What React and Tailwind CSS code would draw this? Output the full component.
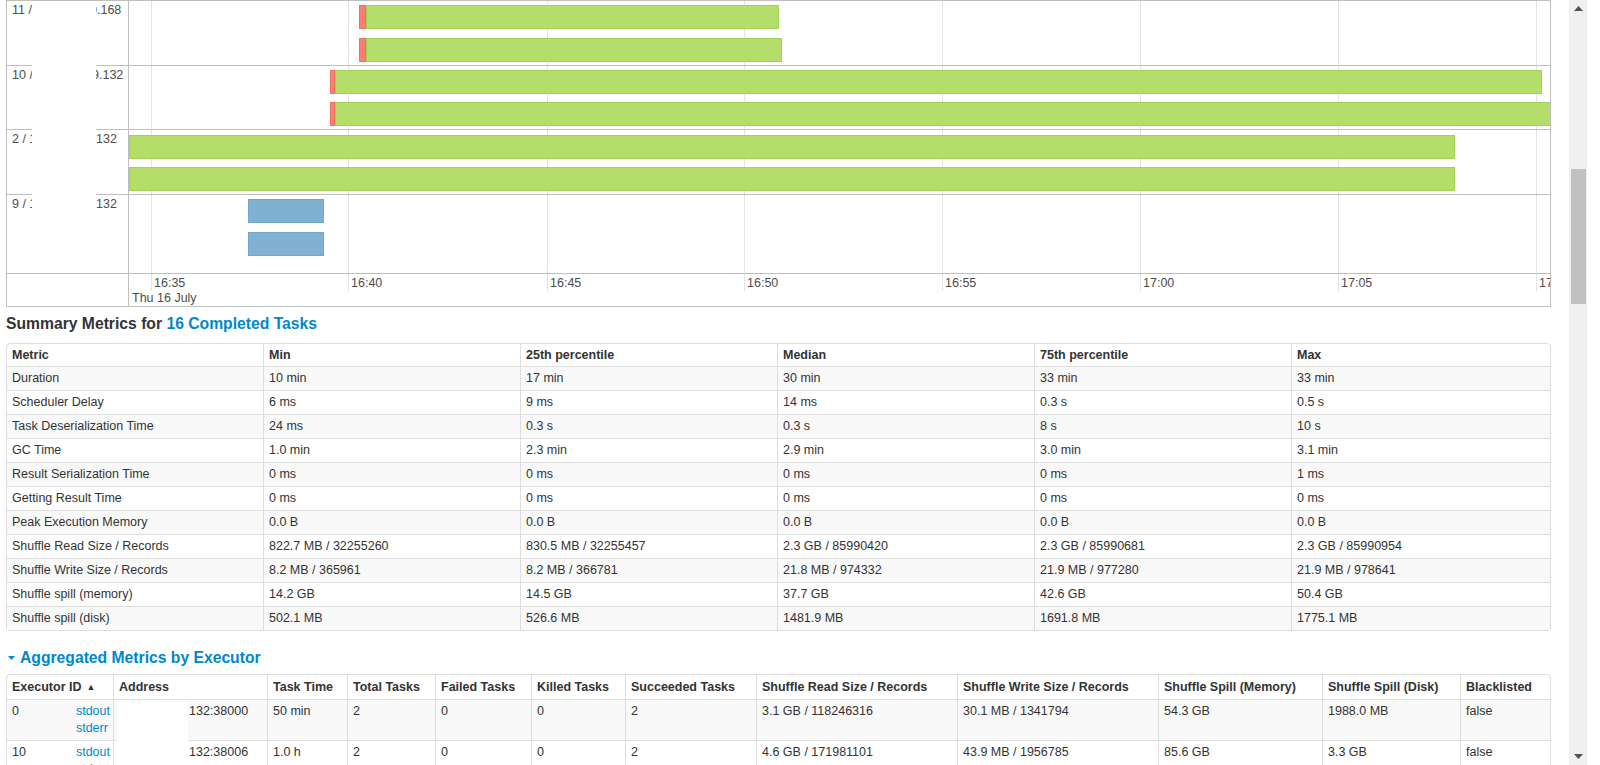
import React from "react";

const ticks = ["16:35", "16:40", "16:45", "16:50", "16:55", "17:00", "17:05", "17:10"];
const tickX = [22, 219, 418, 615, 813, 1011, 1209, 1407];

const lanes = [
  {
    prefix: "11 /",
    gap: "w-[78px]",
    suffix: "0.168",
    h: "h-[65px]",
    bars: [
      { left: 230, top: 4, width: 420, red: 7 },
      { left: 230, top: 37, width: 423, red: 7 },
    ],
  },
  {
    prefix: "10 /",
    gap: "w-[80px]",
    suffix: "9.132",
    h: "h-[64px]",
    bars: [
      { left: 201, top: 4, width: 1212, red: 5 },
      { left: 201, top: 36, width: 1300, red: 5 },
    ],
  },
  {
    prefix: "2 / 1",
    gap: "w-[84px]",
    suffix: "132",
    h: "h-[65px]",
    bars: [
      { left: 0, top: 5, width: 1326 },
      { left: 0, top: 37, width: 1326 },
    ],
  },
  {
    prefix: "9 / 1",
    gap: "w-[84px]",
    suffix: "132",
    h: "h-[79px]",
    bars: [
      { left: 119, top: 4, width: 76, blue: true },
      { left: 119, top: 37, width: 76, blue: true },
    ],
  },
];

const summaryHead = ["Metric", "Min", "25th percentile", "Median", "75th percentile", "Max"];
const summaryWidths = ["w-[256px]", "w-[257px]", "w-[257px]", "w-[257px]", "w-[257px]", "w-[259px]"];
const summaryRows = [
  ["Duration", "10 min", "17 min", "30 min", "33 min", "33 min"],
  ["Scheduler Delay", "6 ms", "9 ms", "14 ms", "0.3 s", "0.5 s"],
  ["Task Deserialization Time", "24 ms", "0.3 s", "0.3 s", "8 s", "10 s"],
  ["GC Time", "1.0 min", "2.3 min", "2.9 min", "3.0 min", "3.1 min"],
  ["Result Serialization Time", "0 ms", "0 ms", "0 ms", "0 ms", "1 ms"],
  ["Getting Result Time", "0 ms", "0 ms", "0 ms", "0 ms", "0 ms"],
  ["Peak Execution Memory", "0.0 B", "0.0 B", "0.0 B", "0.0 B", "0.0 B"],
  ["Shuffle Read Size / Records", "822.7 MB / 32255260", "830.5 MB / 32255457", "2.3 GB / 85990420", "2.3 GB / 85990681", "2.3 GB / 85990954"],
  ["Shuffle Write Size / Records", "8.2 MB / 365961", "8.2 MB / 366781", "21.8 MB / 974332", "21.9 MB / 977280", "21.9 MB / 978641"],
  ["Shuffle spill (memory)", "14.2 GB", "14.5 GB", "37.7 GB", "42.6 GB", "50.4 GB"],
  ["Shuffle spill (disk)", "502.1 MB", "526.6 MB", "1481.9 MB", "1691.8 MB", "1775.1 MB"],
];

const execHead = [
  "Executor ID",
  "Address",
  "Task Time",
  "Total Tasks",
  "Failed Tasks",
  "Killed Tasks",
  "Succeeded Tasks",
  "Shuffle Read Size / Records",
  "Shuffle Write Size / Records",
  "Shuffle Spill (Memory)",
  "Shuffle Spill (Disk)",
  "Blacklisted",
];
const execWidths = [
  "w-[106px]",
  "w-[154px]",
  "w-[80px]",
  "w-[88px]",
  "w-[96px]",
  "w-[94px]",
  "w-[131px]",
  "w-[201px]",
  "w-[201px]",
  "w-[164px]",
  "w-[138px]",
  "w-[90px]",
];
const execRows = [
  ["0", "132:38000", "50 min", "2", "0", "0", "2", "3.1 GB / 118246316", "30.1 MB / 1341794", "54.3 GB", "1988.0 MB", "false"],
  ["10", "132:38006", "1.0 h", "2", "0", "0", "2", "4.6 GB / 171981101", "43.9 MB / 1956785", "85.6 GB", "3.3 GB", "false"],
];

const Bar = ({ left, top, width, red, blue }) => (
  <div className="absolute flex h-[24px]" style={{ left, top, width }}>
    {red ? (
      <div className="h-full shrink-0 bg-[#fb8072] border border-[#e9735f]" style={{ width: red }} />
    ) : null}
    <div
      className={`h-full flex-1 border ${
        blue ? "bg-[#80b1d3] border-[#72a6cb]" : "bg-[#b3de69] border-[#a3d257]"
      }`}
    />
  </div>
);

const Timeline = () => (
  <div className="relative flex w-[1545px] border border-[#bfbfbf] overflow-hidden text-[12.5px] leading-[15px] text-[#4d4d4d]">
    {/* labels */}
    <div className="w-[122px] shrink-0 flex flex-col border-r border-[#bfbfbf]">
      {lanes.map((lane, i) => (
        <div key={i} className={`${lane.h} flex border-b border-[#bfbfbf] pl-[5px] pt-[2px]`}>
          <span className={`${lane.gap} shrink-0 whitespace-nowrap`}>{lane.prefix}</span>
          <span className="whitespace-nowrap">{lane.suffix}</span>
        </div>
      ))}
      <div className="h-[32px]" />
    </div>

    {/* chart */}
    <div className="relative flex-1 flex flex-col overflow-hidden">
      {tickX.map((x) => (
        <div key={x} className="absolute top-0 h-[290px] w-px bg-[#e5e5e5]" style={{ left: x }} />
      ))}
      {lanes.map((lane, i) => (
        <div key={i} className={`relative ${lane.h} border-b border-[#bfbfbf]`}>
          {lane.bars.map((b, j) => (
            <Bar key={j} {...b} />
          ))}
        </div>
      ))}
      <div className="relative h-[32px]">
        {ticks.map((t, i) => (
          <span key={t} className="absolute top-[2px] whitespace-nowrap" style={{ left: tickX[i] + 3 }}>
            {t}
          </span>
        ))}
        <span className="absolute left-[3px] top-[17px] whitespace-nowrap">Thu 16 July</span>
      </div>
    </div>

    {/* redacted host names */}
    <div className="absolute left-[25px] top-0 w-[64px] h-[262px] bg-white" />
  </div>
);

const cell = "px-[5px] py-[3px] leading-[17px] text-left align-top font-normal";

const SummaryTable = () => (
  <table className="table-fixed border-separate border-spacing-0 w-[1545px] border border-[#ddd] rounded-[4px] text-[12.5px]">
    <thead>
      <tr>
        {summaryHead.map((h, i) => (
          <th
            key={h}
            className={`${summaryWidths[i]} px-[5px] py-[2px] leading-[18px] text-left font-bold ${
              i ? "border-l border-[#ddd]" : ""
            }`}
          >
            {h}
          </th>
        ))}
      </tr>
    </thead>
    <tbody>
      {summaryRows.map((row, r) => (
        <tr key={row[0]} className={r % 2 === 0 ? "bg-[#f9f9f9]" : "bg-white"}>
          {row.map((v, i) => (
            <td key={i} className={`${cell} border-t border-[#ddd] ${i ? "border-l" : ""}`}>
              {v}
            </td>
          ))}
        </tr>
      ))}
    </tbody>
  </table>
);

const ExecutorTable = () => (
  <div className="relative w-[1545px]">
    <table className="table-fixed border-separate border-spacing-0 w-[1545px] border border-[#ddd] rounded-[4px] text-[12.5px]">
      <thead>
        <tr>
          {execHead.map((h, i) => (
            <th
              key={h}
              className={`${execWidths[i]} px-[5px] py-[3px] leading-[18px] text-left font-bold whitespace-nowrap ${
                i ? "border-l border-[#ddd]" : ""
              }`}
            >
              {h}
              {i === 0 ? <span className="ml-[5px] text-[9px] align-[1px]">▲</span> : null}
            </th>
          ))}
        </tr>
      </thead>
      <tbody>
        {execRows.map((row, r) => (
          <tr key={row[0]} className={r % 2 === 0 ? "bg-[#f9f9f9]" : "bg-white"}>
            {row.map((v, i) => (
              <td key={i} className={`${cell} border-t border-[#ddd] ${i ? "border-l" : ""}`}>
                {i === 0 ? (
                  <div className="flex justify-between">
                    <span>{v}</span>
                    <span className="flex flex-col mr-[-2px] text-[#0088cc]">
                      <span>stdout</span>
                      <span>stderr</span>
                    </span>
                  </div>
                ) : i === 1 ? (
                  <span className="ml-[70px] whitespace-nowrap">{v}</span>
                ) : (
                  v
                )}
              </td>
            ))}
          </tr>
        ))}
      </tbody>
    </table>
    {/* redacted address prefix */}
    <div className="absolute left-[111px] top-[26px] w-[71px] h-[80px] bg-white" />
  </div>
);

const Scrollbar = () => (
  <div className="w-[18px] h-full shrink-0 bg-[#f0f0f0] flex flex-col">
    <div className="h-[17px] flex items-center justify-center">
      <svg width="9" height="5" viewBox="0 0 9 5">
        <polygon points="0,5 9,5 4.5,0" fill="#505050" />
      </svg>
    </div>
    <div className="mt-[152px] ml-[2px] mr-px h-[135px] bg-[#c1c1c1]" />
    <div className="flex-1" />
    <div className="h-[17px] flex items-center justify-center">
      <svg width="9" height="5" viewBox="0 0 9 5">
        <polygon points="0,0 9,0 4.5,5" fill="#505050" />
      </svg>
    </div>
  </div>
);

export default function App() {
  return (
    <div className="flex w-[1600px] h-[765px] overflow-hidden bg-white text-[#333] font-['Liberation_Sans',Arial,sans-serif]">
      <div className="w-[1569px] shrink-0 pl-[6px]">
        <Timeline />

        <h4 className="mt-[7px] mb-[9px] text-[15.7px] leading-[20px] font-bold text-[#333]">
          Summary Metrics for <a className="text-[#0088cc]">16 Completed Tasks</a>
        </h4>
        <SummaryTable />

        <h4 className="mt-[17px] mb-[6px] flex items-center text-[15.7px] leading-[20px] font-bold text-[#0088cc]">
          <svg width="7" height="4" viewBox="0 0 7 4" className="ml-[2px] mr-[5px]">
            <polygon points="0,0 7,0 3.5,4" fill="#0088cc" />
          </svg>
          Aggregated Metrics by Executor
        </h4>
        <ExecutorTable />
      </div>
      <Scrollbar />
    </div>
  );
}
